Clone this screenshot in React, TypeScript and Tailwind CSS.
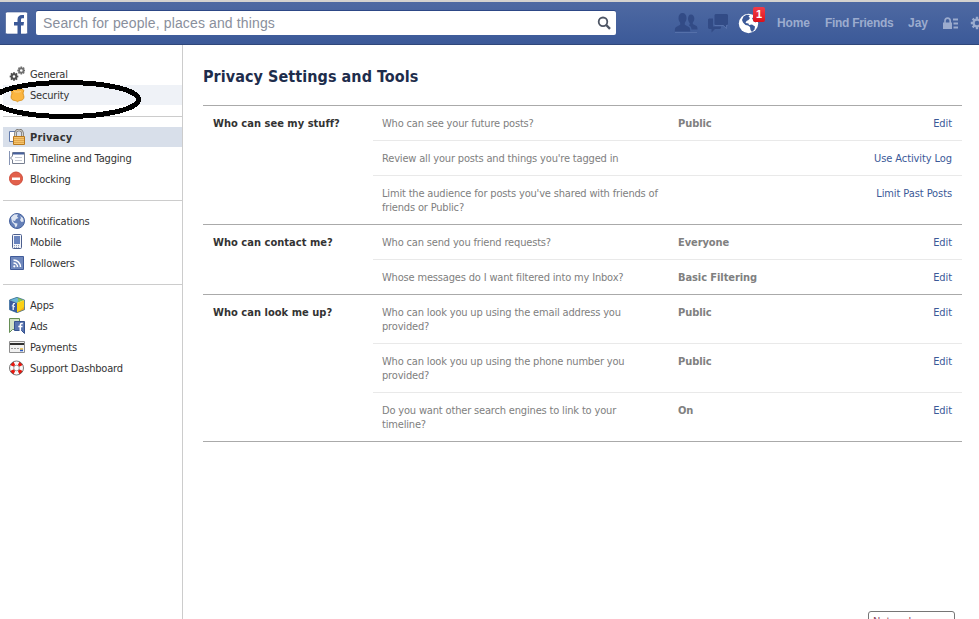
import type { ReactNode } from 'react';

type NavItem = {
  label: string;
  icon: ReactNode;
  state?: 'hover' | 'active';
};

type SettingRow = {
  text: string[];
  value?: string;
  action: string;
};

type SettingGroup = {
  title: string;
  rows: SettingRow[];
};

const Svg = ({ children }: { children: ReactNode }) => (
  <svg width="16" height="16" viewBox="0 0 16 16" className="block shrink-0">
    {children}
  </svg>
);

const gearTeeth = [0, 45, 90, 135];

const GearsIcon = () => (
  <Svg>
    <g stroke="#4f4f4f" strokeWidth="1.8">
      {gearTeeth.map((a) => (
        <path key={a} d="M.7 10.500h8.600" transform={`rotate(${a} 5 10.5)`} />
      ))}
    </g>
    <circle cx="5" cy="10.500" r="2.300" fill="#fff" stroke="#4f4f4f" strokeWidth="2" />
    <g stroke="#6f6f6f" strokeWidth="1.7">
      {gearTeeth.map((a) => (
        <path key={a} d="M8.300 4.500h8" transform={`rotate(${a} 12.3 4.5)`} />
      ))}
    </g>
    <circle cx="12.300" cy="4.500" r="2.200" fill="#fff" stroke="#6f6f6f" strokeWidth="1.700" />
  </Svg>
);

const BadgeIcon = () => (
  <Svg>
    <path
      d="M4.500 1.500C6 2.700 7 2.200 8.500 1.300 10 2.200 11.200 2.700 12.700 1.500L15 3.700C13.700 5.500 13.800 6.500 14.600 8.300 15.400 10.800 14.500 12.700 12.500 13.300 10.500 13.500 9.700 13.800 8.500 14.700 7.300 13.800 6.500 13.500 4.500 13.300 2.500 12.700 1.600 10.800 2.400 8.300 3.200 6.500 3.300 5.500 2 3.700z"
      fill="#fbb540"
      stroke="#dc9420"
    />
    <path d="M5 4.500c2 .7 5 .7 7 0" fill="none" stroke="#fdd083" />
  </Svg>
);

const PrivacyIcon = () => (
  <Svg>
    <path d="M.5 2.500h6v10h-6z" fill="#fff" stroke="#6079ab" />
    <path d="M6.500 8V4a3.500 3 0 0 1 7 0v4" fill="none" stroke="#77736d" strokeWidth="2.600" />
    <path d="M6.500 8V4a3.500 3 0 0 1 7 0v4" fill="none" stroke="#d5d3cf" />
    <path d="M4.500 7.500h11v8h-11z" fill="#f5c46d" stroke="#b8771c" />
    <path d="M5 9.500h10M5 11.500h10M5 13.500h10" stroke="#e0a64e" />
  </Svg>
);

const TimelineIcon = () => (
  <Svg>
    <path d="M.5 1v14" stroke="#8795b5" />
    <path d="M3.500 2.500h12v11h-12V10L1.500 8l2-2z" fill="#fff" stroke="#777f91" />
    <path d="M4 3.500h11" stroke="#46609c" strokeWidth="2" />
    <path d="M6 7.500h7M6 10.500h7" stroke="#c5c9d2" />
  </Svg>
);

const BlockIcon = () => (
  <Svg>
    <circle cx="7" cy="7.500" r="6.500" fill="#e2604b" stroke="#cf4a38" />
    <path d="M3 6.500h8V9H3z" fill="#fff" />
  </Svg>
);

const GlobeIcon = () => (
  <Svg>
    <circle cx="8" cy="8" r="7.500" fill="#6580b8" stroke="#45619d" />
    <path
      d="M2 4.500 5 1.500 9 1.200 8 3.500 9.500 5 7 6 6 8 3.500 7.500 5.500 10 8.500 10.500 8 13 6.500 14.500 5.500 11.500 3 9zM11 3l3 2 .8 3.500-2.300.5L11 7l1-2z"
      fill="#dfe6f2"
    />
  </Svg>
);

const MobileIcon = () => (
  <Svg>
    <rect x="3.500" y=".5" width="9" height="14" rx="1" fill="#f3f5fa" stroke="#4c5f8e" />
    <path d="M5 2h6v8H5z" fill="#6a84bd" />
    <path d="M5 11.500h6M5 13.300h6" stroke="#8a96b1" strokeDasharray="1 1" />
  </Svg>
);

const FollowersIcon = () => (
  <Svg>
    <path d="M1.500 1.500h13v13h-13z" fill="#6f88bc" stroke="#405b99" />
    <path d="M4.500 8a4 4 0 0 1 4 4M4.500 5a7 7 0 0 1 7 7" fill="none" stroke="#fff" strokeWidth="1.500" />
    <circle cx="5.300" cy="11.300" r="1.100" fill="#fff" />
  </Svg>
);

const AppsIcon = () => (
  <Svg>
    <path d="M8 .3 15.500 3 8 6 .5 3z" fill="#8bc34c" />
    <path d="M8 .3.500 3 8 6 9.500 3z" fill="#6bb5d9" />
    <path d="M.5 3 8 6v9.700l-7.500-3z" fill="#3a5ba0" />
    <path d="M15.500 3 8 6v9.700l7.500-3z" fill="#fcd116" />
    <path d="m8 15.700 7.500-3V9.500z" fill="#f3ad16" />
    <path d="M8 .3 15.500 3v9.700L8 15.700l-7.500-3V3z" fill="none" stroke="#31679a" strokeWidth=".7" />
    <path d="M6 6.700c-1.500-.5-1.800.2-1.800 1.500V13M2.800 8.800l3 1" fill="none" stroke="#fff" strokeWidth="1.200" />
  </Svg>
);

const AdsIcon = () => (
  <Svg>
    <path d="M.5.500h10v11H3.500l-3 3z" fill="#d2e3c6" stroke="#668e55" />
    <path d="M5.500 3.500h10v12l-3-3h-7z" fill="#5874b0" stroke="#35528f" />
    <path d="M13.800 5.500h-1c-1 0-1.500.5-1.500 1.500v6M9.300 8.500h4.200" fill="none" stroke="#fff" strokeWidth="1.500" />
  </Svg>
);

const PaymentsIcon = () => (
  <Svg>
    <path d="M.5 2.500h15v11H.5z" fill="#f1f1f1" stroke="#8d8d8d" />
    <path d="M1 5h14" stroke="#303030" strokeWidth="2" />
    <path d="M2 9.500h9" stroke="#999" strokeDasharray="2 1" />
    <path d="M11 10h3" stroke="#e9b32d" strokeWidth="1.500" />
    <path d="M11 11.500h3" stroke="#2c5cc5" strokeWidth="1.500" />
  </Svg>
);

const SupportIcon = () => (
  <Svg>
    <circle cx="7.500" cy="8" r="4.900" fill="none" stroke="#fafafa" strokeWidth="4" />
    <g fill="none" stroke="#e8190f" strokeWidth="4">
      <path d="M5.800 3.400a4.900 4.900 0 0 1 3.400 0M12.100 6.300a4.900 4.900 0 0 1 0 3.400M9.200 12.600a4.900 4.900 0 0 1-3.400 0M2.900 9.700a4.900 4.900 0 0 1 0-3.400" transform="rotate(45 7.5 8)" />
    </g>
    <circle cx="7.500" cy="8" r="7" fill="none" stroke="#555" strokeWidth=".8" />
    <circle cx="7.500" cy="8" r="2.800" fill="#fff" stroke="#777" strokeWidth=".7" />
  </Svg>
);

const navGroups: NavItem[][] = [
  [
    { label: 'General', icon: <GearsIcon /> },
    { label: 'Security', icon: <BadgeIcon />, state: 'hover' },
  ],
  [
    { label: 'Privacy', icon: <PrivacyIcon />, state: 'active' },
    { label: 'Timeline and Tagging', icon: <TimelineIcon /> },
    { label: 'Blocking', icon: <BlockIcon /> },
  ],
  [
    { label: 'Notifications', icon: <GlobeIcon /> },
    { label: 'Mobile', icon: <MobileIcon /> },
    { label: 'Followers', icon: <FollowersIcon /> },
  ],
  [
    { label: 'Apps', icon: <AppsIcon /> },
    { label: 'Ads', icon: <AdsIcon /> },
    { label: 'Payments', icon: <PaymentsIcon /> },
    { label: 'Support Dashboard', icon: <SupportIcon /> },
  ],
];

const settings: SettingGroup[] = [
  {
    title: 'Who can see my stuff?',
    rows: [
      { text: ['Who can see your future posts?'], value: 'Public', action: 'Edit' },
      { text: ["Review all your posts and things you're tagged in"], action: 'Use Activity Log' },
      { text: ["Limit the audience for posts you've shared with friends of", 'friends or Public?'], action: 'Limit Past Posts' },
    ],
  },
  {
    title: 'Who can contact me?',
    rows: [
      { text: ['Who can send you friend requests?'], value: 'Everyone', action: 'Edit' },
      { text: ['Whose messages do I want filtered into my Inbox?'], value: 'Basic Filtering', action: 'Edit' },
    ],
  },
  {
    title: 'Who can look me up?',
    rows: [
      { text: ['Who can look you up using the email address you', 'provided?'], value: 'Public', action: 'Edit' },
      { text: ['Who can look you up using the phone number you', 'provided?'], value: 'Public', action: 'Edit' },
      { text: ['Do you want other search engines to link to your', 'timeline?'], value: 'On', action: 'Edit' },
    ],
  },
];

function Header() {
  return (
    <header className="flex h-[45px] items-start overflow-hidden border-t-2 border-[#d4d2cf] bg-linear-to-b from-[#4e69a2] to-[#3b5998] pl-[5px] pt-[9px] shadow-[inset_0_-1px_0_#2f477a]">
      <svg width="23" height="24" viewBox="0 0 23 24" className="shrink-0">
        <rect x=".5" y="1" width="22" height="22" rx="1.500" fill="#fff" stroke="#37528d" strokeWidth=".6" />
        <path d="M12.500 23v-8.500H9V11h3.500V8.500C12.500 5.500 14.300 4 17 4h2v3.300h-1.500c-1.200 0-1.500.6-1.500 1.700v2h3l-.5 3.500H16V23z" fill="#3b5998" />
      </svg>
      <div className="ml-2 flex h-6 w-[580px] shrink-0 items-center justify-between rounded-[2px] bg-white pl-[7px] pr-[5px] shadow-[0_-1px_0_#2d4886]">
        <span className="font-['Liberation_Sans',Arial,sans-serif] text-[14px] tracking-[0.13px] text-[#898f9c]">
          Search for people, places and things
        </span>
        <svg width="14" height="14" viewBox="0 0 14 14" fill="none" stroke="#4e5665">
          <circle cx="6" cy="5.800" r="4.300" strokeWidth="1.800" />
          <path d="m9.200 9 3.800 3.800" strokeWidth="2.400" />
        </svg>
      </div>
      <div className="flex h-6 items-center pl-[58px]">
        <svg width="24" height="22" viewBox="0 0 24 22" fill="#324b86">
          <path d="M14 7c0-2.500 1-4.500 3-4.500s3.300 1.700 3.300 4c0 1.800-.6 3-1.500 4v1.500l3.700 2c.8.500 1 1.500 1 3.500h-6c0-2-.7-3.200-2.500-4l.8-1.800c.3-.6-1.800-2-1.800-4.700z" />
          <path d="M4.500 6C4.500 3 6 1 8.500 1s4 2 4 5c0 2-.7 3.700-1.700 4.700v2l4 2.200c1 .5 1.400 1.500 1.400 4.600H.8c0-3.100.4-4.100 1.400-4.600l4-2.200v-2C5.200 9.700 4.500 8 4.500 6z" />
          <path d="M1 20.500h22" stroke="#5a75ad" strokeWidth=".8" />
        </svg>
        <svg width="22" height="20" viewBox="0 0 22 20" fill="#324b86" className="ml-[9px]">
          <path d="M8.500 1H20l1 1v9l-1 1h-1v2.500L16.500 12H8.500l-1-1V2z" />
          <path d="M1 6.500 2 5.500h4v8h8V15l-1 1H8l-3.500 3.500V16H2l-1-1z" />
          <path d="M7.500 12.500h8.700l3.300 3v-3h1" fill="none" stroke="#5a75ad" strokeWidth=".8" />
        </svg>
        <div className="relative ml-[9px]">
          <svg width="21" height="21" viewBox="0 0 21 21">
            <circle cx="10.500" cy="10.500" r="9.700" fill="#fff" />
            <path
              d="M5.500 3.500 8.500 1.800 12 2l-1.500 1.500L12 5 10.500 7 8.500 8l-1 2 3 .5.5 1.500 3-.5 3 2-.5 3-2.500 2.500-1.500-2-.5-3-2-1.500-2.500-.5-2.500-2.500L4 7z"
              fill="#3b5998"
            />
            <path d="m14 5 3-1 2.500 4-2 1.500-2-1.500z" fill="#3b5998" />
          </svg>
          <span className="absolute -top-[6px] left-[15px] flex h-[15px] w-3 items-center justify-center rounded-[2px] bg-linear-to-b from-[#f43b48] to-[#dc0d17] font-['Liberation_Sans',Arial,sans-serif] text-[11px] font-bold text-white">
            1
          </span>
        </div>
      </div>
      <nav className="flex h-6 shrink-0 items-center whitespace-nowrap pl-[18px] font-['Liberation_Sans',Arial,sans-serif] text-[12px] font-bold tracking-[-0.3px] text-[#9cacce]">
        <span className="w-12 tracking-[-0.1px]">Home</span>
        <span className="w-[83px]">Find Friends</span>
        <span className="w-[35px] tracking-normal">Jay</span>
        <svg width="16" height="13" viewBox="0 0 16 13" fill="#9cacce" className="shrink-0">
          <path d="M0 5.500h9V12H0z" />
          <path d="M2 6V3.800C2 .2 7.200.2 7.200 3.800V6" fill="none" stroke="#9cacce" strokeWidth="1.600" />
          <path d="M10 1.500h5v2h-5zM10.500 5.500h4.500v2h-4.500zM10.500 9.500h4.500v2h-4.500z" />
        </svg>
        <svg width="14" height="14" viewBox="0 0 14 14" className="ml-[11px] shrink-0" fill="none" stroke="#9cacce">
          {gearTeeth.map((a) => (
            <path key={a} d="M.8 7h2.700M10.500 7h2.700" strokeWidth="2.400" transform={`rotate(${a} 7 7)`} />
          ))}
          <circle cx="7" cy="7" r="3.400" strokeWidth="2.200" />
        </svg>
      </nav>
    </header>
  );
}

function Sidebar() {
  return (
    <aside className="relative w-[183px] shrink-0 border-r border-[#ccc] pl-[3px] pt-[19px]">
      {navGroups.map((group, i) => (
        <div key={i}>
          {i > 0 && (
            <div className="flex h-[21px] items-center">
              <div className="h-px w-full bg-[#ccc]" />
            </div>
          )}
          {group.map((item) => (
            <div
              key={item.label}
              className={`mb-px flex h-5 items-center whitespace-nowrap pl-[6px] text-[#333] ${
                item.state === 'active' ? 'bg-[#d8dfea] font-bold tracking-[0.2px]' : 'tracking-[-0.18px]'
              } ${item.state === 'hover' ? 'bg-[#eff2f7]' : ''}`}
            >
              {item.icon}
              <span className="ml-[5px] pt-0.5">{item.label}</span>
            </div>
          ))}
        </div>
      ))}
      {/* hand-drawn circle around Security */}
      <svg width="145" height="44" viewBox="0 0 145 44" className="absolute left-0 top-[32px]" fill="none" shapeRendering="crispEdges">
        <ellipse cx="66" cy="22.500" rx="72.500" ry="17" stroke="#000" strokeWidth="5" />
      </svg>
    </aside>
  );
}

function SettingsList() {
  return (
    <div className="mt-[17px] border-b border-[#aaa]">
      {settings.map((group) => (
        <section key={group.title} className="flex border-t border-[#aaa]">
          <h3 className="w-[170px] shrink-0 pl-[10px] pt-[11px] font-bold tracking-[0.03px] text-[#333]">{group.title}</h3>
          <div className="flex-1 divide-y divide-[#e9e9e9]">
            {group.rows.map((row) => (
              <div key={row.text[0]} className="flex pb-[9px] pl-[9px] pr-[10px] pt-[11px]">
                <div className="w-[296px] whitespace-nowrap tracking-[-0.17px] text-[#808080]">
                  {row.text.map((line) => (
                    <p key={line}>{line}</p>
                  ))}
                </div>
                <div className="flex-1 font-bold tracking-[-0.08px] text-[#808080]">{row.value}</div>
                <a className="tracking-[-0.09px] text-[#3b5998]">{row.action}</a>
              </div>
            ))}
          </div>
        </section>
      ))}
    </div>
  );
}

export default function App() {
  return (
    <div className="relative flex h-[619px] w-[979px] flex-col overflow-hidden bg-white font-['DejaVu_Sans_Condensed','Noto_Sans',sans-serif] text-[11px] leading-[14px]">
      <Header />
      <div className="flex flex-1">
        <Sidebar />
        <main className="w-[779px] pl-5 pt-[21px]">
          <h2 className="text-[16px] font-bold leading-[22px] tracking-[0.06px] text-[#1e2d4c]">Privacy Settings and Tools</h2>
          <SettingsList />
        </main>
      </div>
      <div className="absolute left-[868px] top-[611px] h-6 w-[87px] rounded-[3px] border border-[#767676] bg-white pl-1 pt-[3px] text-[#8c4a66]">
        Network
      </div>
    </div>
  );
}
